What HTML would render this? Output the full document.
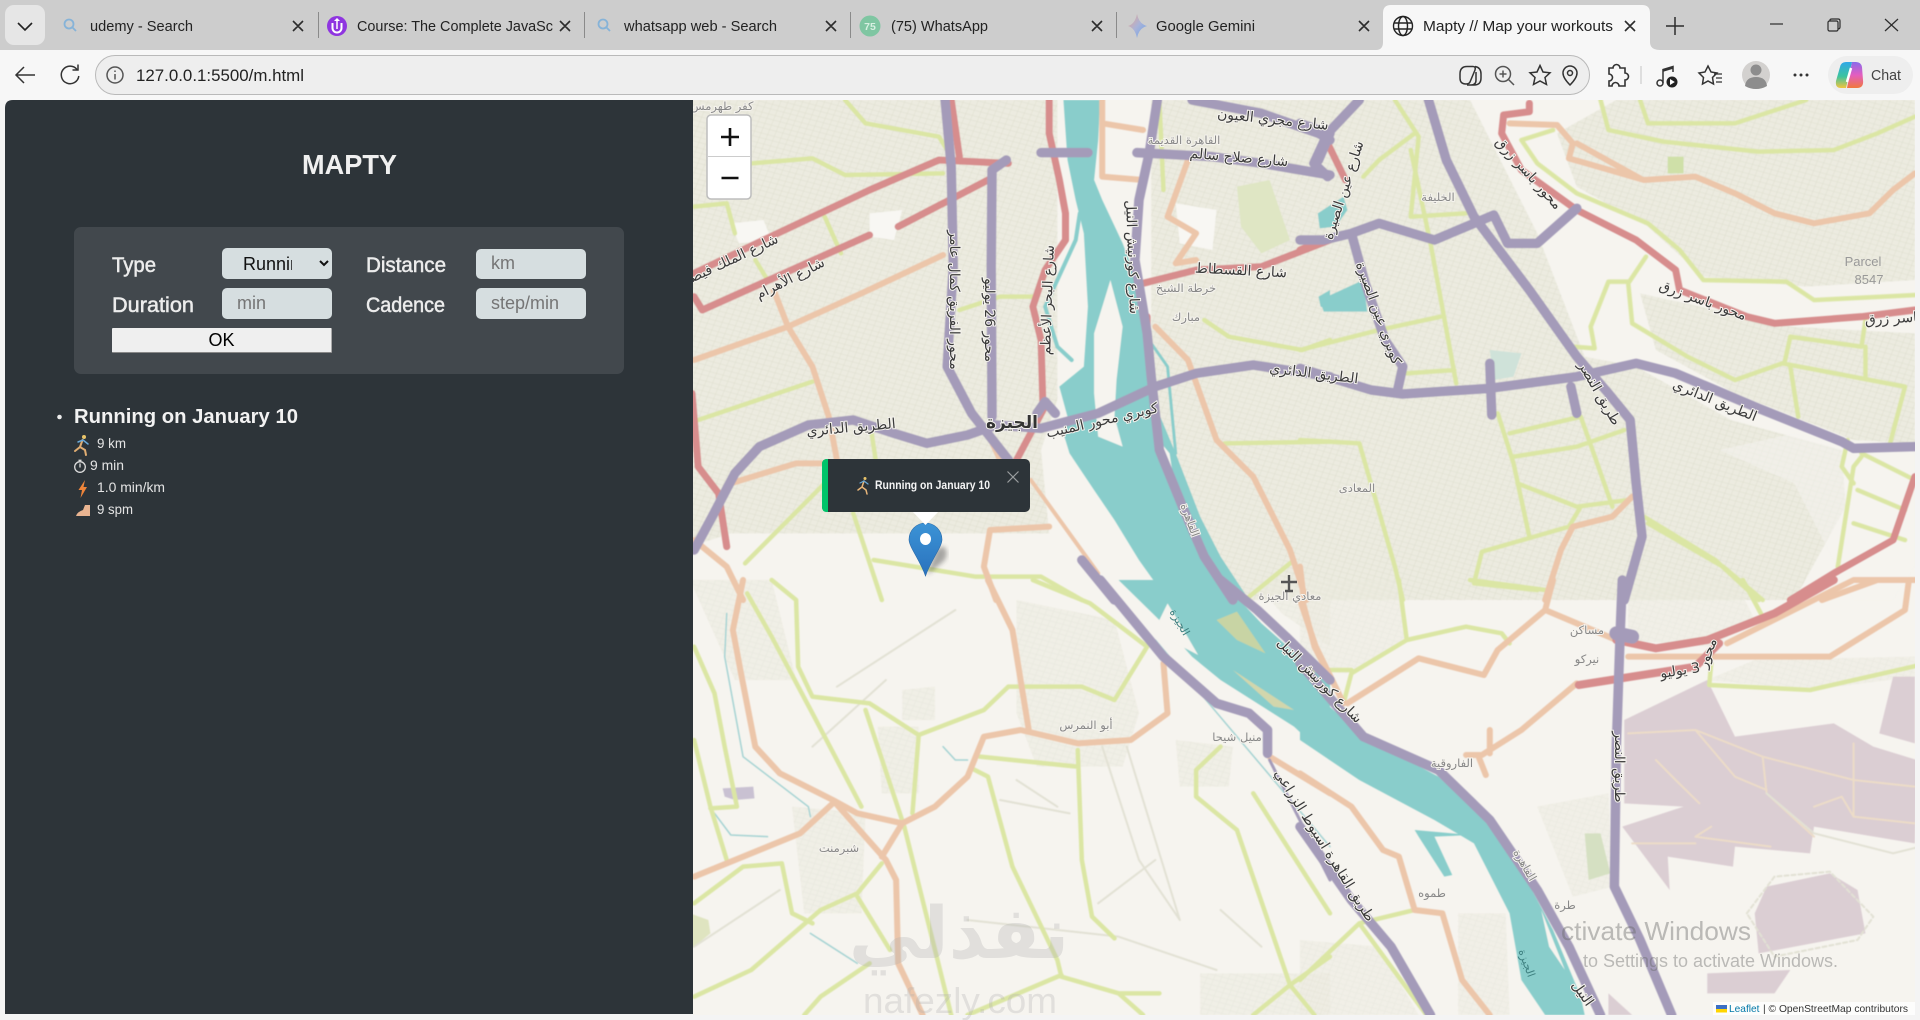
<!DOCTYPE html>
<html lang="en"><head><meta charset="utf-8"><title>Mapty // Map your workouts</title>
<style>
html,body{margin:0;padding:0;width:1920px;height:1020px;overflow:hidden;background:#f3f3f3;font-family:"Liberation Sans",sans-serif}
svg{position:absolute;left:0;top:0}
.ch{font-family:"Liberation Sans",sans-serif;fill:#222;font-size:15px}
#map path{vector-effect:non-scaling-stroke;stroke-linejoin:round;stroke-linecap:round}
#map path:not(.f){fill:none}
#map path.f{stroke:none}
#map path.ur{fill:url(#st)}
#map path.wa{fill:#89cdcb}
#map path.mil{fill:#dbced3}
#map .p{stroke:#a49bb9;stroke-width:9.500}
#map .r{stroke:#d78d8d;stroke-width:7}
#map .o{stroke:#ecc6aa;stroke-width:6}
#map .g{stroke:#dbe6a4;stroke-width:4.5}
#map .t{stroke:#e2e1d4;stroke-width:2}
#map .tw{stroke:#a5d3d3;stroke-width:1.5}
#map .ts{stroke:#ecdcc8;stroke-width:2}
.l{font-family:"DejaVu Sans",sans-serif;text-anchor:middle;font-size:14px;fill:#3a3a3a;paint-order:stroke;stroke:#f5f3ee;stroke-width:2px;direction:rtl}
.lg{font-size:11.500px;fill:#888}
input,select,button{position:absolute;box-sizing:border-box;font-family:"Liberation Sans",sans-serif}
input,select{background:#d6dee0;border:none;border-radius:5px;font-size:18px;height:31px;width:110px;outline:none}
input{padding:0 15px}
select{padding:0 24px 0 17px;color:#111}
button{left:112px;top:328px;width:220px;height:25px;background:#efefef;border:none;border-bottom:1px solid #888;border-right:1px solid #aaa;border-radius:1px;font-size:18px;color:#000;padding:0}
</style></head><body>
<svg width="1920" height="1020" viewBox="0 0 1920 1020">
<defs>
<clipPath id="mc"><path d="M693,100H1915V1007Q1915,1015 1907,1015H693Z"/></clipPath>
<pattern id="st" width="34" height="30" patternUnits="userSpaceOnUse" patternTransform="rotate(18)"><rect width="34" height="30" fill="#ecebe0"/><path d="M0,10H34M0,24H34M9,0V30M26,0V30" stroke="#dcdccd" stroke-width="1.200" fill="none" style="vector-effect:none"/></pattern>
<linearGradient id="gm" x1="0" y1="0" x2="1" y2="1"><stop offset="0" stop-color="#eaa58f"/><stop offset=".5" stop-color="#a9b3d8"/><stop offset="1" stop-color="#6aa1ea"/></linearGradient>
<linearGradient id="cp1" x1="0" y1="0" x2="0" y2="1"><stop offset="0" stop-color="#2fa8e8"/><stop offset=".55" stop-color="#3cc3a0"/><stop offset="1" stop-color="#f2c53d"/></linearGradient>
<linearGradient id="cp2" x1="0" y1="0" x2="0" y2="1"><stop offset="0" stop-color="#8a6bea"/><stop offset=".5" stop-color="#e35ec0"/><stop offset="1" stop-color="#f0783c"/></linearGradient>
<linearGradient id="mk" x1="0" y1="0" x2="0" y2="1"><stop offset="0" stop-color="#3b93d6"/><stop offset="1" stop-color="#2a72bd"/></linearGradient>
<filter id="b1"><feGaussianBlur stdDeviation=".6"/></filter>
<filter id="b3"><feGaussianBlur stdDeviation="2.500"/></filter>
</defs>

<!-- browser chrome -->
<rect width="1920" height="50" fill="#cdcdcd"/>
<rect y="50" width="1920" height="50" fill="#f7f7f7"/>
<rect x="5" y="5" width="40" height="40" rx="9" fill="#e6e6e6"/>
<path d="M18,23l7,7 7,-7" fill="none" stroke="#222" stroke-width="1.6"/>
<path d="M1376,50Q1383,50 1383,42V13Q1383,5 1391,5H1642Q1650,5 1650,13V42Q1650,50 1660,50Z" fill="#f7f7f7"/>
<g stroke="#8a8a8a" stroke-width="1"><path d="M318.500,12V38M584.500,12V38M850.500,12V38M1116.500,12V38"/></g>
<g fill="none" stroke="#86b3d8" stroke-width="1.8"><circle cx="69" cy="24" r="4.500"/><path d="M72.500,27.500L76,31"/><circle cx="603" cy="24" r="4.500"/><path d="M606.500,27.500L610,31"/></g>
<circle cx="337" cy="26" r="10" fill="#8f35e0"/><path d="M332.500,23v5a4.500,4.500 0 0 0 9,0v-5" fill="none" stroke="#fff" stroke-width="2"/><path d="M337,18l3,3h-6z" fill="#fff"/><path d="M337,21v8" stroke="#fff" stroke-width="1.5"/>
<circle cx="870" cy="26" r="10.500" fill="#7fc6a2"/><text x="870" y="30" text-anchor="middle" font-size="10.500" font-weight="bold" fill="#d8f0e2" font-family="Liberation Sans">75</text>
<path d="M1137,14Q1139,24 1147,26Q1139,28 1137,38Q1135,28 1128,26Q1135,24 1137,14Z" fill="url(#gm)"/>
<g fill="none" stroke="#222" stroke-width="1.400"><circle cx="1403" cy="26" r="9.500"/><ellipse cx="1403" cy="26" rx="4.500" ry="9.500"/><path d="M1394,23H1412M1394,29H1412"/></g>
<g stroke="#2c2c2c" stroke-width="1.600" fill="none">
<path d="M293,21L303,31M303,21L293,31M560,21L570,31M570,21L560,31M826,21L836,31M836,21L826,31M1092,21L1102,31M1102,21L1092,31M1359,21L1369,31M1369,21L1359,31M1625,21L1635,31M1635,21L1625,31"/>
<path d="M1675,17V35M1666,26H1684" stroke-width="1.500"/>
<path d="M1770,24H1783" stroke-width="1.200"/>
<rect x="1828" y="21" width="10" height="10" rx="1.500" stroke-width="1.200"/><path d="M1830,21V20Q1830,19 1832,19H1838Q1840,19 1840,21V27Q1840,29 1838,29" stroke-width="1.200"/>
<path d="M1885,19L1898,31M1898,19L1885,31" stroke-width="1.200"/>
</g>
<text class="ch" x="90" y="31" textLength="103" lengthAdjust="spacingAndGlyphs">udemy - Search</text>
<text class="ch" x="357" y="31" textLength="196" lengthAdjust="spacingAndGlyphs">Course: The Complete JavaSc</text>
<text class="ch" x="624" y="31" textLength="153" lengthAdjust="spacingAndGlyphs">whatsapp web - Search</text>
<text class="ch" x="891" y="31" textLength="97" lengthAdjust="spacingAndGlyphs">(75) WhatsApp</text>
<text class="ch" x="1156" y="31" textLength="99" lengthAdjust="spacingAndGlyphs">Google Gemini</text>
<text class="ch" x="1423" y="31" textLength="190" lengthAdjust="spacingAndGlyphs">Mapty // Map your workouts</text>

<rect x="95.500" y="55.500" width="1494" height="39" rx="19.500" fill="#eeeeee" stroke="#b9b9b9"/>
<g fill="none" stroke="#333" stroke-width="1.500">
<path d="M35,75H16M24,67L16,75L24,83"/>
<path d="M77,69.500A8.800,8.800 0 1 0 78.800,76"/><path d="M78,64.500V70H72.500"/>
<circle cx="115" cy="75" r="8" stroke="#555"/><path d="M115,74V79.500M115,70.500V72" stroke="#555"/>
<path d="M1467,66.500H1473Q1476,66.500 1475,70L1470,82Q1469,84 1466,84Q1460,84 1460,78V74Q1460,66.500 1467,66.500Z"/><path d="M1475,66.500Q1481,67.500 1481,74V78Q1481,85 1474,85H1467M1476,72V80Q1476,85 1471,85"/>
<circle cx="1503" cy="74" r="7.500" stroke="#555"/><path d="M1503,70.500V77.500M1499.500,74H1506.500M1508.500,79.500L1514,85" stroke="#555"/>
<path d="M1540,65.500L1543,72L1550,72.800L1545,77.500L1546.500,84.500L1540,81L1533.500,84.500L1535,77.500L1530,72.800L1537,72Z"/>
<path d="M1570,85Q1563,78 1563,73A7,7 0 0 1 1577,73Q1577,78 1570,85Z"/><circle cx="1570" cy="73" r="2.500"/>
<path d="M1609,68h4a3.500,3.500 0 0 1 7,0h5v5a3.500,3.500 0 0 1 0,7v6h-6a3.500,3.500 0 0 0 -7,0h-3v-5a3.500,3.500 0 0 0 0,-7z" stroke-width="1.600"/>
<path d="M1641,66V84" stroke="#d5d5d5"/>
<path d="M1663,83V69.500L1673,66.500V72M1663,71L1673,68"/><circle cx="1660" cy="83" r="3"/>
<path d="M1708,66L1711,72L1717,73L1712.500,77.500L1713.500,84L1708,81L1702.500,84L1703.500,77.500L1699,73L1705,72Z"/><path d="M1714,74H1722M1716,78H1722M1716,82H1722" stroke-width="1.300"/>
</g>
<circle cx="1672" cy="82" r="5.500" fill="#222"/><path d="M1670,79v6l4.800,-3z" fill="#fff"/>
<circle cx="1756" cy="75" r="14" fill="#d3d1cf"/><circle cx="1756" cy="70" r="5.500" fill="#8d8d8d"/><path d="M1745,86Q1746,77 1756,77Q1766,77 1767,86Q1762,89 1756,89Q1750,89 1745,86Z" fill="#8d8d8d"/>
<g fill="#333"><circle cx="1795" cy="75" r="1.500"/><circle cx="1801" cy="75" r="1.500"/><circle cx="1807" cy="75" r="1.500"/></g>
<rect x="1828" y="56" width="85" height="38" rx="19" fill="#eeeeee"/>
<path d="M1846,62h6L1846,88h-5q-6,0 -5,-7l4,-14q1,-5 6,-5z" fill="url(#cp1)"/>
<path d="M1852,62h4q5,0 6,5l1,13q1,8 -6,8h-10Z" fill="url(#cp2)"/>
<path d="M1851,68L1847,82" stroke="#fff" stroke-width="2.500"/>
<text class="ch" x="1871" y="80" textLength="30" lengthAdjust="spacingAndGlyphs" style="font-size:15px;fill:#444">Chat</text>
<text class="ch" x="136" y="81" textLength="168" lengthAdjust="spacingAndGlyphs" style="font-size:17px;fill:#222">127.0.0.1:5500/m.html</text>

<!-- page -->
<rect x="0" y="100" width="1920" height="920" fill="#f4f4f4"/>

<!-- map -->
<g id="map" clip-path="url(#mc)">
<rect x="690" y="100" width="1230" height="920" fill="#f6f4ef"/>
<g filter="url(#b1)">
<!-- urban -->
<g transform="translate(690,100) scale(.40816,.33333)">
<path class="f ur" d="M0,0L900,0L900,900L860,1050L880,1300L300,1300L100,1300L0,1340Z"/>
<path class="f ur" d="M1130,0L1568,0L1568,1500L1300,1500L1200,1230L1130,900Z"/>
<path class="f" fill="#dfe6c4" d="M1340,260L1420,240L1470,420L1400,460L1350,380Z"/>
<path class="f" fill="#f8f7f3" d="M100,370L180,360L200,420L120,430ZM440,340L520,330L500,420L440,410ZM1190,310L1290,330L1280,450L1200,430Z"/>
</g>
<g transform="translate(1300,100) scale(.39541,.33333)">
<path class="f ur" d="M0,0L430,0L600,400L720,770L850,800L1090,960L1370,1050L1380,1220L1250,1500L0,1500Z"/>
<path class="f ur" d="M800,0L1555,0L1555,540L1280,560L1020,530L880,380L700,260L650,100Z"/>
<path class="f ur" d="M860,580L1240,680L1555,700L1555,1030L1400,1020L1100,880L900,750Z"/>
<path class="f" fill="#f6f4ef" d="M1060,1050L1250,1150L1400,1500L1500,1500L1555,1400L1555,1040L1380,1040L1250,1000Z" opacity=".5"/>
<path class="f" fill="#cfe0a8" d="M930,170L970,170L970,220L930,220Z"/>
<path class="f" fill="#cfe2d9" d="M480,750L560,760L540,830L490,840Z"/>
</g>
<g transform="translate(690,580) scale(.40816,.33333)">
<path class="f ur" d="M460,440L560,440L560,640L470,640ZM800,60L1040,120L1100,400L1060,560L850,560L800,400ZM250,680L430,700L420,1000L280,1000ZM1190,480L1330,500L1320,620L1200,620ZM1250,1180L1568,1180L1568,1305L1250,1305ZM0,0L200,0L260,300L110,300ZM520,330L600,320L600,420L520,420ZM1380,0L1568,0L1568,200L1450,100Z" opacity=".6"/>
<path class="f" fill="#c9c1d2" d="M80,625L155,620L158,655L110,660L85,650Z"/>
<path class="f" fill="#dfe4c0" d="M0,1000L45,1020L50,1060L0,1110Z"/>
</g>
<g transform="translate(1300,580) scale(.39541,.33333)">
<path class="f ur" d="M0,0L250,0L270,180L120,280L0,270ZM600,680L780,640L790,920L690,950ZM830,20L1100,0L1150,120L1040,200L830,180ZM1150,240L1555,230L1555,290L1290,330L1030,300ZM400,1000L520,1000L530,1305L400,1305ZM0,1080L200,1100L300,1305L0,1305Z" opacity=".55"/>
<path class="f" fill="#d5e0c2" d="M720,760L760,760L785,880L730,900Z"/>
<path class="f mil" d="M820,420L1030,300L1100,470L1350,430L1450,500L1560,540L1555,790L1300,740L1290,820L1100,800L1095,860L930,830L935,930L815,740L970,680L820,670Z"/>
<path class="f mil" d="M1500,290L1555,290L1555,490L1465,460Z"/>
<path class="f mil" d="M1150,1000L1180,920L1340,880L1410,930L1430,1060L1160,1120Z"/>
<path class="f mil" d="M1030,1180L1240,1170L1200,1240L1030,1240ZM780,1240L840,1305L780,1305Z"/>
<path class="ts" d="M830,460L1000,450L1170,530L1400,600L1555,620M1170,530L1180,640L1300,770M1000,450L1100,590L1180,630M900,540L950,600L1010,670M1300,680L1370,650L1400,710M1400,490L1400,710L1555,730M1040,740L1000,770L1190,800M840,790L1000,790"/>
<path class="t" d="M1130,1000L1200,890L1340,875L1450,1010L1410,1080L1200,1130Z" style="stroke-dasharray:4 3"/>
<path class="t" d="M1180,640L1300,760L1500,820L1568,800"/>
</g>

<!-- water -->
<g transform="translate(690,100) scale(.40816,.33333)">
<path class="f wa" d="M915,0L1005,0L1000,120L990,240L1010,300L1060,430L1100,560L1120,680L1120,800L1135,900L1190,1060L1250,1250L1300,1370L1370,1500L1170,1500L1100,1380L1040,1260L990,1170L930,1060L915,1000L925,950L905,860L965,800L975,620L965,400L945,300L925,180Z"/>
<path class="f" fill="#f6f4ef" d="M1030,540L1060,680L1045,840L1040,950L1060,1040L1000,1010L990,880L990,700Z"/>
<path class="f" fill="#f6f4ef" d="M1135,1000L1175,1060L1190,1180L1160,1100Z"/>
<path class="f wa" d="M1540,340L1568,330L1568,380L1545,375ZM1540,590L1568,570L1568,630L1545,620Z"/>
<path style="stroke:#89cdcb;stroke-width:4" d="M955,340L945,420L870,620L900,740L935,780"/>
<path style="stroke:#89cdcb;stroke-width:3" d="M1130,730L1170,800L1190,1060"/>
</g>
<g transform="translate(1300,100) scale(.39541,.33333)">
<path class="f wa" d="M50,600L160,540L170,635L60,635ZM45,340L110,290L120,330L90,380L50,385Z"/>
</g>
<g transform="translate(690,580) scale(.40816,.33333)">
<path class="f wa" d="M1050,0L1200,0L1210,60L1260,0L1300,0L1400,130L1520,260L1568,290L1568,540L1480,440L1300,300L1230,230L1150,120Z"/>
<path class="f" fill="#f6f4ef" d="M1170,70L1200,130L1245,225L1190,190L1150,120Z"/>
<path class="f" fill="#c8d4a4" d="M1290,120L1340,95L1410,220L1340,180Z"/>
<path class="f" fill="#d2d6ac" d="M1330,270L1480,390L1430,380Z"/>
</g>
<g transform="translate(1300,580) scale(.39541,.33333)">
<path class="f wa" d="M0,300L160,470L350,590L480,730L560,870L640,1050L710,1250L720,1305L620,1305L560,1200L530,1000L440,790L340,720L150,600L0,480Z"/>
<path class="f" fill="#f6f4ef" d="M610,990L670,1170L630,1100Z"/>
<path class="f wa" d="M290,750L430,765L340,770L385,885L365,890L300,770Z"/>
</g>

<!-- minor tracks -->
<g transform="translate(690,580) scale(.40816,.33333)">
<path class="t" d="M1000,970L1140,840M1010,500L1100,840L1200,1020M1070,500L1200,1020M760,660L930,700M680,1020L1050,1070L1290,1170M300,500L480,300M360,320L650,90M800,600L900,680M1400,1100L1300,990M10,1100L220,930"/>
<path class="tw" d="M90,100L85,230L130,530L290,680L295,710M60,700L100,765L190,770M295,1060L410,1150M620,500L650,540L680,540M1140,180L1568,800"/>
</g>

<!-- green -->
<g transform="translate(690,100) scale(.40816,.33333)"><path class="g" d="M380,0L430,70L610,110L630,150M150,190L300,175L380,225L620,220M10,320L90,310L110,400M330,350L370,460M160,480L190,540M660,630L760,590L840,590M20,960L300,845M1260,660L1320,710L1500,750L1568,720M1310,1030L1568,1025M1360,1500L1480,1380M1150,0L1160,270M135,1390L330,1150M400,1240L470,1500M450,1380L700,1430L860,1430L960,1500M445,1000L455,1080"/></g>
<g transform="translate(1300,100) scale(.39541,.33333)"><path class="g" d="M760,0L780,90L920,125L1160,155L1350,150L1460,100L1555,50M860,0L880,70L1100,70L1280,0M560,120L640,90M560,120L600,190L700,280L880,370L960,450L1020,540L1230,545L1300,600L1555,585M875,470L830,550L840,670L980,770L1100,840L1220,790L1530,860L1490,1040M830,545L780,545L735,680L745,745L690,740M1225,790L1240,710L1420,740L1430,660M1430,740L1430,830M1240,800L1260,950M0,750L200,690L355,650M280,150L330,430L395,850M0,1020L150,1030L240,1400L260,1500M500,940L540,1090L580,1310M540,1070L700,1040L820,990M530,1000L710,950M710,950L790,1220M550,1150L700,1220L830,1200M710,1220L680,1280L460,1355L440,1450L600,1470M1420,1070L1400,1100L1360,1400M1420,1060L1555,1140M1410,1170L1530,1230M1400,1270L1530,1320M870,1250L1050,1380L1160,1500M880,1270L1070,1400L1170,1500M1385,1020L1370,1100L1400,1150M160,230L200,180L290,100M280,350L420,340M240,0L300,110L280,350M270,820L390,810"/></g>
<g transform="translate(690,580) scale(.40816,.33333)"><path class="g" d="M10,200L60,340L85,500L115,680L50,685M10,480L50,680L90,840M140,40L200,170L300,400L420,680M200,0L260,60L265,260L300,350L440,370L560,465L720,390L780,320L960,320L1040,360L1120,200L980,70L840,0M430,390L525,740L640,1305M560,470L545,700M690,565L730,590L790,860L900,1140L910,1190L1050,1240L1150,1240M950,510L960,840L985,1010L1040,1075M710,530L950,560M10,970L130,860L225,850L250,1000L300,1030M10,1250L150,1170L320,990L410,940L470,850M410,950L490,1110M280,1305L320,1250L440,1150M680,1305L910,1185M1050,1240L1110,1305M1300,500L1240,570L1240,650L1340,750L1470,1215L1530,1305M1470,1215L1380,1305M1470,1215L1568,1130M1380,640L1568,1000"/></g>
<g transform="translate(1300,580) scale(.39541,.33333)"><path class="g" d="M250,0L270,180L130,280L110,370M0,270L130,270M270,180L420,140L510,160L530,190M1040,250L1035,315L1290,330L1568,255M1120,0L1170,110M430,0L620,30M0,1200L150,1030L290,990M150,1030L320,1305"/></g>

<!-- orange -->
<g transform="translate(690,100) scale(.40816,.33333)"><path class="o" d="M10,780L240,680L420,580L620,465M205,570L240,680L300,800L340,950L360,1080M100,1150L260,1090L330,1090M1010,0L1010,230L1110,240M1010,70L1110,90M1220,180L1170,350L1240,400L1190,490L1240,480M1140,680L1220,780L1290,1020L1380,1130L1470,1350L1510,1500M730,1000L760,1080M735,1290L720,1400L750,1500M735,1290L880,1280M10,1320L90,1400L130,1500"/><path class="o" style="stroke-width:4" d="M835,1140L1000,1420"/></g>
<g transform="translate(1300,100) scale(.39541,.33333)"><path class="o" d="M530,70L650,75L690,130L680,175L870,240L1000,230L1100,280L1200,340L1300,370L1440,340L1500,270L1555,220M700,130L860,235M840,1190L790,1250L690,1280L660,1350L620,1500M1320,1500L1460,1440L1555,1440M0,1400L10,1500"/></g>
<g transform="translate(690,580) scale(.40816,.33333)"><path class="o" d="M130,0L105,150L125,280L160,500L220,580L350,660L410,700L520,730L600,680L680,590L720,470L810,450L950,490L1080,480L1170,400L1160,250M350,660L480,840L505,900L510,1150L570,1305M10,890L270,760L350,670M730,0L790,150L830,450M520,730L470,830M1420,530L1568,640M1500,60L1530,200L1568,290"/></g>
<g transform="translate(1300,580) scale(.39541,.33333)"><path class="o" d="M700,310L560,450L460,525L420,525M480,450L480,520M450,525L470,585M640,0L620,90L500,210L465,285L300,235L120,370M620,90L800,180M0,60L40,200L110,370M0,580L130,680L210,810L250,830L290,990L360,1000L410,1200L480,1305M830,230L1340,230L1530,90L1540,0L1400,0L1080,190"/></g>

<!-- red -->
<g transform="translate(690,100) scale(.40816,.33333)"><path class="r" d="M10,520L180,420L440,270L610,180L780,190M30,630L10,590M30,630L440,405M510,380L730,240M880,0L880,100L905,240L920,340L920,420L870,510L840,620L860,720L865,930L800,1080M1110,550L1240,510L1400,500L1568,420M1120,650L1120,700M5,880L20,1100L70,1180L90,1340M640,0L660,170"/></g>
<g transform="translate(1300,100) scale(.39541,.33333)"><path class="r" d="M580,10L580,35L515,45L510,100L560,210L700,330L850,420L950,510L960,570L1130,650L1200,670L1420,650L1555,630M0,450L60,420M70,130L115,240M1555,1130L1500,1320L1350,1420L1240,1500"/></g>
<g transform="translate(1300,580) scale(.39541,.33333)"><path class="r" style="stroke-width:8" d="M800,180L900,205L1030,180L1200,100L1350,0M705,315L1000,260L1060,190"/></g>

<!-- purple -->
<g transform="translate(690,100) scale(.40816,.33333)"><path class="p" d="M625,0L640,200L645,500L630,800L690,940L780,1080M960,1380L1040,1500M775,180L740,210L738,500L740,950M10,1350L50,1260L110,1120L170,1040L290,975L400,960L500,1000L580,1030L680,1005L750,975L860,985L1000,940L1140,860L1240,820L1380,795L1568,830M860,158L975,158M1095,158L1280,170L1400,190L1568,225M1230,0L1400,40L1540,100L1568,120M1540,180L1568,100M1145,0L1125,160L1100,300L1090,480L1120,700L1130,830L1150,1050L1210,1230L1260,1370L1330,1500M850,940L870,905L895,940"/></g>
<g transform="translate(1300,100) scale(.39541,.33333)"><path class="p" d="M325,0L370,180L440,350L580,570L700,770L780,880L835,960L850,1150L865,1310L820,1500M0,805L180,870L260,882L480,865L700,830L850,790L950,820L1160,925L1370,1025L1400,1045L1555,1040M0,420L60,420L130,400L200,370L340,420L440,370L490,345L525,430L600,430L700,325M130,400L165,550L215,720L260,800L245,880M150,0L70,100L35,190L70,230M0,70L70,100M480,790L485,945M685,860L700,940"/></g>
<g transform="translate(690,580) scale(.40816,.33333)"><path class="p" d="M1005,0L1160,230L1290,370L1370,400L1415,450L1415,520M1300,0L1390,90L1460,170L1568,300"/><path class="p" style="stroke-width:3" d="M1420,540L1568,900"/></g>
<g transform="translate(1300,580) scale(.39541,.33333)"><path class="p" d="M0,250L160,470L350,570L480,720L600,930L680,1100L760,1305M815,0L810,150L800,500L795,920L860,1080L940,1305M0,740L130,960L230,1100L330,1305"/><path class="p" style="stroke-width:14" d="M800,160L840,170"/></g>
</g>

<!-- map labels -->
<g>
<text class="l lg" x="722" y="110">كفر طهرمس</text>
<text class="l" x="1273" y="124" transform="rotate(6 1273 119)">شارع مجري العيون</text>
<text class="l lg" x="1184" y="144">القاهرة القديمة</text>
<text class="l" x="1239" y="162" transform="rotate(5 1239 157)">شارع صلاح سالم</text>
<text class="l lg" x="1438" y="201">الخليفة</text>
<text class="l" x="729" y="265" transform="rotate(-25 729 260)">شارع الملك فيصل</text>
<text class="l" x="790" y="283" transform="rotate(-27 790 278)">شارع الأهرام</text>
<text class="l" x="955" y="305" transform="rotate(90 955 300)">محور الفريق كمال عامر</text>
<text class="l" x="990" y="325" transform="rotate(90 990 320)">محور 26 يوليو</text>
<text class="l" x="1047" y="305" transform="rotate(-88 1047 300)">شارع البحر الأعظم</text>
<text class="l" x="1133" y="262" transform="rotate(88 1133 257)">شارع كورنيش النيل</text>
<text class="l" x="1241" y="275" transform="rotate(3 1241 270)">شارع القسطاط</text>
<text class="l lg" x="1186" y="292">خرطة الشيخ</text>
<text class="l lg" x="1186" y="321">مبارك</text>
<text class="l" x="851" y="432" transform="rotate(-5 851 427)">الطريق الدائري</text>
<text class="l" x="1314" y="378" transform="rotate(7 1314 373)">الطريق الدائري</text>
<text class="l" x="1012" y="428" style="font-size:17px;font-weight:bold;fill:#333">الجيزة</text>
<text class="l" x="1102" y="425" transform="rotate(-13 1102 420)">كوبري محور المنيب</text>
<text class="l lg" x="1357" y="492">المعادى</text>
<text class="l lg" x="1290" y="600">معادي الجيزة</text>
<text class="l" x="1343" y="195" transform="rotate(-72 1343 190)">شارع عين الصيرة</text>
<text class="l" x="1379" y="318" transform="rotate(70 1379 313)">كوبري عين الصيرة</text>
<text class="l" x="1529" y="178" transform="rotate(48 1529 173)">محور باسر زرق</text>
<text class="l" x="1703" y="305" transform="rotate(20 1703 300)">محور باسر زرق</text>
<text class="l" x="1893" y="323" transform="rotate(-3 1893 318)">باسر زرق</text>
<text class="l" x="1600" y="398" transform="rotate(60 1600 393)">طريق النصر</text>
<text class="l" x="1715" y="405" transform="rotate(22 1715 400)">الطريق الدائري</text>
<text x="1863" y="266" text-anchor="middle" font-family="Liberation Sans" font-size="13" fill="#999">Parcel</text>
<text x="1869" y="284" text-anchor="middle" font-family="Liberation Sans" font-size="13" fill="#999">8547</text>
<text class="l" x="1320" y="685" transform="rotate(45 1320 680)">شارع كورنيش النيل</text>
<text class="l" x="1180" y="626" transform="rotate(60 1180 622)" style="font-size:11px;fill:#3d7f7f;stroke:none">الجيزة</text>
<text class="l lg" x="1086" y="729">أبو النمرس</text>
<text class="l lg" x="1237" y="741">منيل شيحا</text>
<text class="l lg" x="839" y="852">شبرمنت</text>
<text class="l" x="1325" y="850" transform="rotate(58 1325 845)">طريق القاهرة اسيوط الزراعي</text>
<text class="l lg" x="1587" y="634">مساكن</text>
<text class="l lg" x="1587" y="663">نيركو</text>
<text class="l" x="1680" y="675" transform="rotate(-9 1680 670)">3 يوليو</text>
<text class="l" x="1707" y="658" transform="rotate(-70 1707 653)">محور</text>
<text class="l" x="1620" y="772" transform="rotate(90 1620 767)">طريق النصر</text>
<text class="l lg" x="1452" y="767">الفاروقية</text>
<text class="l lg" x="1525" y="869" transform="rotate(60 1525 865)">القاهرة</text>
<text class="l lg" x="1190" y="524" transform="rotate(70 1190 520)">القاهرة</text>
<text class="l lg" x="1432" y="897">طموه</text>
<text class="l" x="1527" y="967" transform="rotate(70 1527 963)" style="font-size:11px;fill:#3d7f7f;stroke:none">الجيزة</text>
<text class="l lg" x="1565" y="909">طرة</text>
<text class="l" x="1583" y="998" transform="rotate(55 1583 993)">النيل</text>
</g>
</g>
<path d="M1289,575V592M1281,582H1297M1285,591H1293" stroke="#555" stroke-width="2.400" fill="none"/>

<!-- watermark / activation text -->
<text x="959" y="958" text-anchor="middle" font-family="DejaVu Sans" font-weight="bold" font-size="72" fill="#b0b0b0" opacity=".3" direction="rtl">نفذلي</text>
<text x="1561" y="940" textLength="190" lengthAdjust="spacingAndGlyphs" font-family="Liberation Sans" font-size="26" fill="#666" opacity=".42">ctivate Windows</text>
<text x="1583" y="967" textLength="255" lengthAdjust="spacingAndGlyphs" font-family="Liberation Sans" font-size="18" fill="#666" opacity=".42">to Settings to activate Windows.</text>
<text x="863" y="1013" textLength="194" lengthAdjust="spacingAndGlyphs" font-family="Liberation Sans" font-size="36" fill="#b0b0b0" opacity=".3">nafezly.com</text>

<!-- attribution -->
<rect x="1713" y="1002" width="202" height="13" fill="#fff" opacity=".8"/>
<rect x="1716" y="1005" width="11" height="4" fill="#3c6fc4"/><rect x="1716" y="1009" width="11" height="3.500" fill="#ffd500"/>
<text x="1729" y="1012" textLength="30.500" lengthAdjust="spacingAndGlyphs" font-family="Liberation Sans" font-size="10.500" fill="#0078a8">Leaflet</text>
<text x="1763" y="1012" textLength="145" lengthAdjust="spacingAndGlyphs" font-family="Liberation Sans" font-size="10.500" fill="#333">| © OpenStreetMap contributors</text>

<!-- marker -->
<path d="M927,575L944,561Q950,552 943,546L936,550Z" fill="#333" opacity=".4" filter="url(#b3)"/>
<path d="M925.500,576C920,560 909,547 909,539.500A16.500,16.500 0 0 1 942,539.500C942,547 931,560 925.500,576Z" fill="url(#mk)" stroke="#2a6aa8" stroke-width=".6"/>
<ellipse cx="925.500" cy="539" rx="5.500" ry="6" fill="#fff"/>

<!-- popup -->
<path d="M912,511H939L925.500,525Z" fill="#fff"/>
<rect x="822" y="459" width="208" height="53" rx="5" fill="#2d3439"/>
<path d="M827,459H828V512H827Q822,512 822,507V464Q822,459 827,459Z" fill="#00c46a"/>
<path d="M1007.500,471.500L1018.500,482.500M1018.500,471.500L1007.500,482.500" stroke="#9a9d9f" stroke-width="1.200" fill="none"/>
<text x="875" y="489" textLength="115" lengthAdjust="spacingAndGlyphs" font-family="Liberation Sans" font-weight="bold" font-size="11.500" fill="#f5f5f5">Running on January 10</text>
<g fill="none" stroke-linecap="round"><circle cx="865" cy="478.500" r="1.500" fill="#e9c46a"/><path d="M864,481L862,487L858,490M862,487L866,490L867,494" stroke="#e9b67a" stroke-width="1.500"/><path d="M860,483L864,481L868,484" stroke="#6aa9d8" stroke-width="1.200"/></g>

<!-- zoom control -->
<rect x="707" y="115" width="44" height="84" rx="4" fill="#fff" stroke="#bdbdbd" stroke-width="1.500"/>
<path d="M708,156.500H750" stroke="#ccc"/>
<path d="M730,128V146M721,137H739M721.500,178H738.500" stroke="#111" stroke-width="2.600" fill="none"/>

<!-- sidebar -->
<path d="M5,108Q5,100 13,100H693V1014H5Z" fill="#2d3439"/>
<text x="302" y="174" textLength="95" lengthAdjust="spacingAndGlyphs" font-family="Liberation Sans" font-weight="bold" font-size="28" fill="#f0f0f0">MAPTY</text>
<rect x="74" y="227" width="550" height="147" rx="7" fill="#42484d"/>
<g font-family="Liberation Sans" font-size="21" fill="#ececec" stroke="#ececec" stroke-width=".5">
<text x="112" y="272" textLength="44" lengthAdjust="spacingAndGlyphs">Type</text>
<text x="366" y="272" textLength="80" lengthAdjust="spacingAndGlyphs">Distance</text>
<text x="112" y="312" textLength="82" lengthAdjust="spacingAndGlyphs">Duration</text>
<text x="366" y="312" textLength="79" lengthAdjust="spacingAndGlyphs">Cadence</text>
</g>
<circle cx="59.500" cy="417" r="2.300" fill="#ececec"/>
<text x="74" y="423" textLength="224" lengthAdjust="spacingAndGlyphs" font-family="Liberation Sans" font-weight="bold" font-size="20" fill="#f2f2f2">Running on January 10</text>
<g font-family="Liberation Sans" font-size="14" fill="#e4e4e4">
<text x="97" y="448" textLength="29" lengthAdjust="spacingAndGlyphs">9 km</text>
<text x="90" y="470" textLength="34" lengthAdjust="spacingAndGlyphs">9 min</text>
<text x="97" y="492" textLength="68" lengthAdjust="spacingAndGlyphs">1.0 min/km</text>
<text x="97" y="514" textLength="36" lengthAdjust="spacingAndGlyphs">9 spm</text>
</g>
<g fill="none" stroke-linecap="round"><circle cx="84" cy="437" r="2" fill="#e9c46a"/><path d="M82.500,440L80,447L75,451M80,447L85,450L86,455" stroke="#e0ad72" stroke-width="2"/><path d="M78,442L83,440L88,444" stroke="#6aa9d8" stroke-width="1.500"/></g>
<g fill="none" stroke="#dcdcdc" stroke-width="1.300"><circle cx="80" cy="467" r="5.300"/><path d="M80,463.500V467.500M78.500,460.300H81.500"/></g>
<path d="M85,480L78.500,490H82L80.500,498L87,487H83.500Z" fill="#f0853a"/>
<path d="M76,516Q77,512 83,510L85,505H90V516Z" fill="#e9b491"/>
</svg>

<select style="left:222px;top:248px"><option>Running</option><option>Cycling</option></select>
<input style="left:476px;top:248.500px;height:30.500px" placeholder="km">
<input style="left:222px;top:288px" placeholder="min">
<input style="left:476px;top:288px" placeholder="step/min">
<button>OK</button>
</body></html>
